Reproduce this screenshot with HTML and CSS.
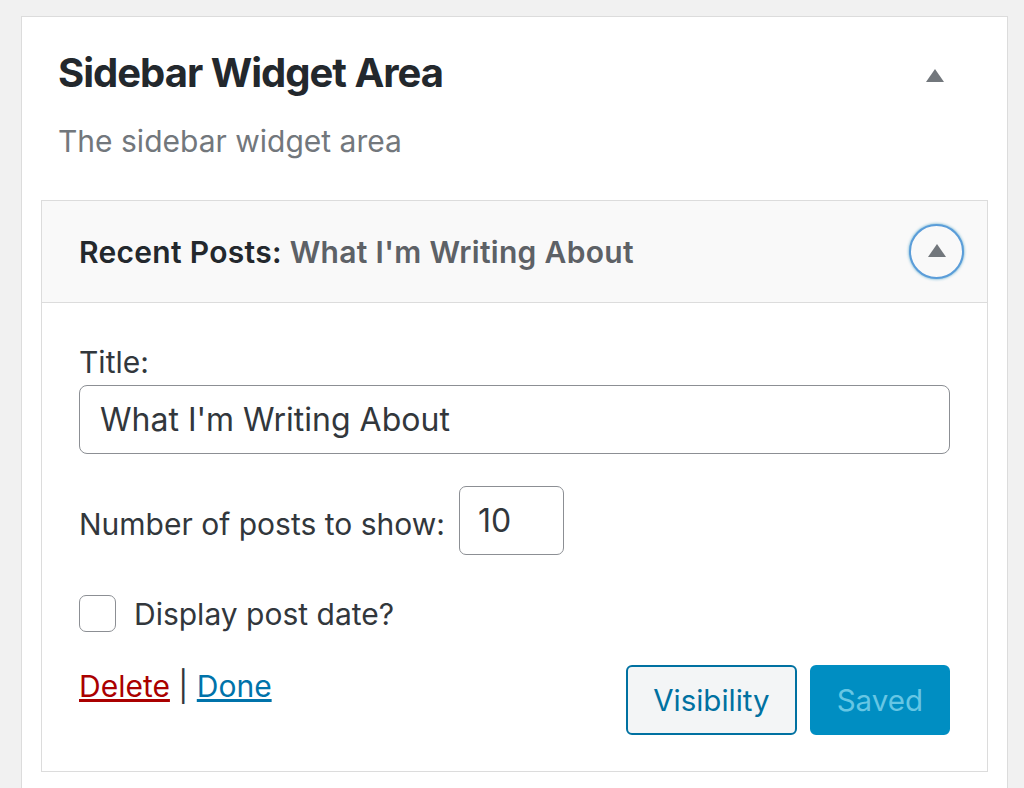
FILE: index.html
```html
<!DOCTYPE html>
<html lang="en">
<head>
  <meta charset="UTF-8" />
  <meta name="viewport" content="width=device-width, initial-scale=1.0"/>
  <title>Sidebar Widget Area</title>
  <link rel="stylesheet" href="styles.css">
</head>
<body>
  <!-- sidebar panel -->
  <div class="panel">
    <div class="panel-head">
      <h2 class="panel-title">Sidebar Widget Area</h2>
      <span class="arrow"></span>
    </div>
    <p class="panel-desc">The sidebar widget area</p>

    <!-- widget -->
    <div class="widget">
      <div class="widget-top">
        <h3 class="widget-title">Recent Posts<span class="colon">:</span> <span class="in-title">What I'm Writing About</span></h3>
        <button class="toggle"><span class="arrow"></span></button>
      </div>

      <div class="widget-inside">
        <label class="label" for="title">Title:</label>
        <input class="text-input" id="title" type="text" value="What I'm Writing About">

        <div class="row">
          <label class="label num-label" for="number">Number of posts to show:</label>
          <input class="num-input" id="number" type="text" value="10">
        </div>

        <div class="row check-row">
          <input class="checkbox" id="show-date" type="checkbox">
          <label class="label" for="show-date">Display post date?</label>
        </div>

        <div class="actions">
          <div class="links">
            <a class="delete" href="#">Delete</a> | <a class="done" href="#">Done</a>
          </div>
          <div class="buttons">
            <button class="button">Visibility</button>
            <button class="button primary">Saved</button>
          </div>
        </div>
      </div>
    </div>
  </div>
</body>
</html>
```

FILE: styles.css
```css
/* page */
body {
  margin: 0;
  background: #f1f1f1;
  font-family: Inter, "Noto Sans", sans-serif;
  color: #23282d;
  overflow: hidden;
}

/* sidebar panel */
.panel {
  margin: 16px 0 0 21px;
  width: 987px;
  height: 800px;
  background: #fff;
  border: 1px solid #dcdcdc;
  box-sizing: border-box;
  padding: 0 19px 0 19px;
}
.panel-head {
  display: flex;
  align-items: center;
  justify-content: space-between;
  padding: 30px 44px 0 17px;
}
.panel-title {
  margin: 0;
  font-size: 40px;
  font-weight: 700;
  letter-spacing: -1px;
  line-height: 52px;
}
.panel-head .arrow {
  margin-top: 4px;
}
.panel-desc {
  margin: 22px 0 0 17px;
  font-size: 30px;
  color: #72777c;
  line-height: 40px;
}

/* triangle arrow */
.arrow {
  display: block;
  width: 0;
  height: 0;
  border-left: 9px solid transparent;
  border-right: 9px solid transparent;
  border-bottom: 13px solid #72777c;
}

/* widget box */
.widget {
  margin-top: 39px;
  border: 1px solid #dcdcdc;
}
.widget-top {
  display: flex;
  align-items: center;
  justify-content: space-between;
  height: 101px;
  padding: 0 23px 0 37px;
  background: #f9f9f9;
  border-bottom: 1px solid #dcdcdc;
}
.widget-title {
  margin: 0;
  font-size: 30px;
  font-weight: 600;
  letter-spacing: 0.3px;
  color: #23282d;
}
.widget-title .in-title {
  color: #5d6166;
}
.toggle {
  display: flex;
  align-items: center;
  justify-content: center;
  width: 55px;
  height: 55px;
  padding: 0;
  border: 2px solid #5b9dd9;
  border-radius: 50%;
  background: #f9f9f9;
  box-shadow: 0 0 3px rgba(30, 140, 190, .8);
}
.toggle .arrow {
  margin-top: -2px;
}

.widget-inside {
  padding: 41px 37px 36px 37px;
}
.label {
  display: block;
  font-size: 30px;
  line-height: 36px;
  color: #32373c;
}
.text-input {
  display: block;
  box-sizing: border-box;
  width: 100%;
  height: 69px;
  margin-top: 5px;
  padding: 0 20px;
  font-family: inherit;
  font-size: 32px;
  color: #32373c;
  border: 1.5px solid #8c8f94;
  border-radius: 8px;
  background: #fff;
}
.row {
  display: flex;
  align-items: center;
  gap: 14px;
  margin-top: 32px;
}
.num-label {
  margin-top: 6px;
}
.num-input {
  box-sizing: border-box;
  width: 105px;
  height: 69px;
  padding: 0 18px;
  font-family: inherit;
  font-size: 32px;
  color: #32373c;
  border: 1.5px solid #8c8f94;
  border-radius: 7px;
  background: #fff;
}
.check-row {
  gap: 18px;
  margin-top: 40px;
}
.checkbox {
  appearance: none;
  margin: 0;
  width: 37px;
  height: 37px;
  border: 1.5px solid #8c8f94;
  border-radius: 7px;
  background: #fff;
}

.actions {
  display: flex;
  justify-content: space-between;
  align-items: flex-start;
  margin-top: 33px;
}
.links {
  font-size: 30px;
  line-height: 36px;
  color: #32373c;
  padding-top: 3px;
}
.delete {
  color: #a00;
}
.done {
  color: #0073aa;
}
.buttons {
  display: flex;
  gap: 13px;
}
.button {
  height: 70px;
  padding: 0 25px;
  font-family: inherit;
  font-size: 29.5px;
  color: #0071a1;
  background: #f3f5f6;
  border: 2px solid #0071a1;
  border-radius: 6px;
}
.button.primary {
  padding: 0 25px;
  color: #66c6e4;
  background: #008ec2;
  border-color: #008ec2;
}
```
